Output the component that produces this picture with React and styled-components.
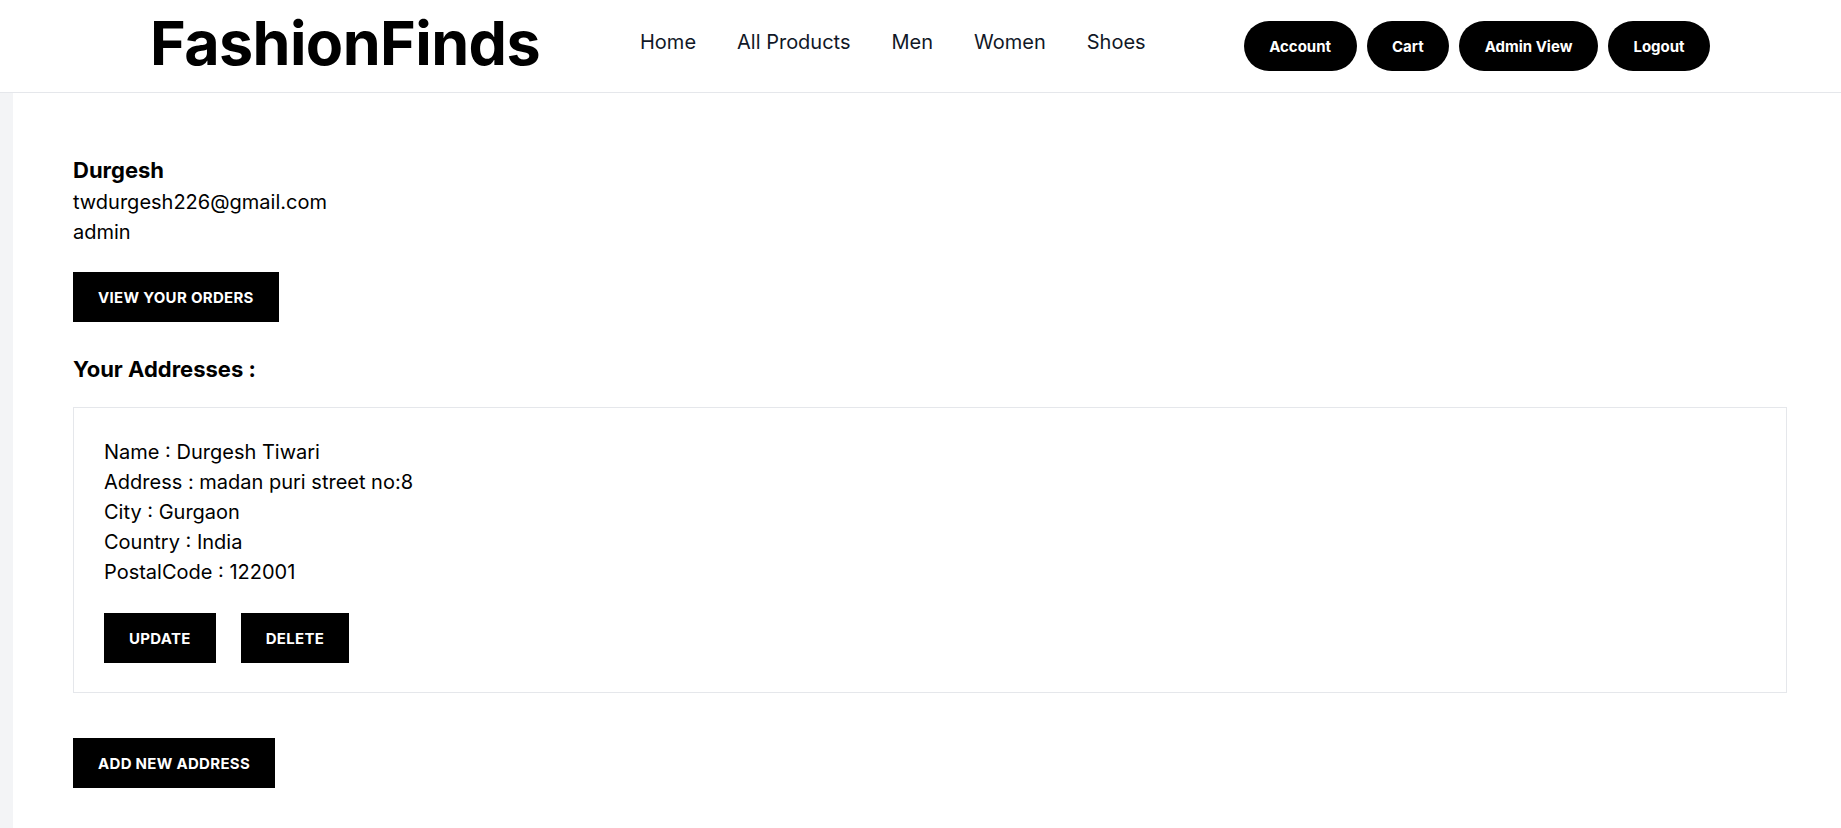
import React from 'react';
import styled, { createGlobalStyle } from 'styled-components';

const GlobalStyle = createGlobalStyle`
  body {
    margin: 0;
    font-family: Inter, "Liberation Sans", sans-serif;
    background: #fff;
    color: #000;
  }
`;

// Header
const Header = styled.header`
  display: flex;
  align-items: center;
  gap: 100px;
  height: 92px;
  padding-left: 150px;
  border-bottom: 1px solid #e5e7eb;
  background: #fff;
`;

const Logo = styled.h1`
  margin: 0 0 6px;
  font-size: 61px;
  font-weight: 700;
  letter-spacing: -0.6px;
  line-height: 1;
  color: #000;
`;

const Nav = styled.nav`
  display: flex;
  gap: 41px;
  margin-bottom: 8px;
`;

const NavLink = styled.a`
  font-size: 20px;
  color: #111827;
  text-decoration: none;
`;

const Actions = styled.div`
  display: flex;
  gap: 10px;
  margin-left: -2px;
`;

const PillButton = styled.button`
  height: 50px;
  padding: 0 25.5px;
  border: none;
  border-radius: 25px;
  background: #000;
  color: #fff;
  font-family: inherit;
  font-size: 15px;
  font-weight: 700;
`;

// Body
const Main = styled.div`
  display: flex;
  min-height: 735px;
`;

const Strip = styled.div`
  width: 13px;
  background: #f3f4f6;
`;

const Content = styled.main`
  flex: 1;
  padding: 61px 54px 40px 60px;
`;

const Name = styled.div`
  font-size: 22px;
  font-weight: 700;
  line-height: 33px;
`;

const Line = styled.div`
  font-size: 20px;
  line-height: 30px;
`;

const BlockButton = styled.button`
  display: block;
  height: 50px;
  padding: 0 25px;
  margin-top: ${p => p.$top || 0}px;
  border: none;
  background: #000;
  color: #fff;
  font-family: inherit;
  font-size: 15px;
  font-weight: 700;
  letter-spacing: 0.3px;
  text-transform: uppercase;
`;

const Heading = styled.h2`
  margin: 31px 0 0;
  font-size: 22px;
  font-weight: 700;
  line-height: 33px;
`;

const Card = styled.div`
  margin-top: 21px;
  padding: 29px 30px 29px;
  border: 1px solid #e5e7eb;
`;

const ButtonRow = styled.div`
  display: flex;
  gap: 25px;
  margin-top: 26px;
`;

const address = {
  Name: 'Durgesh Tiwari',
  Address: 'madan puri street no:8',
  City: 'Gurgaon',
  Country: 'India',
  PostalCode: '122001',
};

export default function App() {
  return (
    <>
      <GlobalStyle />
      <Header>
        <Logo>FashionFinds</Logo>
        <Nav>
          <NavLink>Home</NavLink>
          <NavLink>All Products</NavLink>
          <NavLink>Men</NavLink>
          <NavLink>Women</NavLink>
          <NavLink>Shoes</NavLink>
        </Nav>
        <Actions>
          <PillButton>Account</PillButton>
          <PillButton>Cart</PillButton>
          <PillButton>Admin View</PillButton>
          <PillButton>Logout</PillButton>
        </Actions>
      </Header>
      <Main>
        <Strip />
        <Content>
          <Name>Durgesh</Name>
          <Line>twdurgesh226@gmail.com</Line>
          <Line>admin</Line>
          <BlockButton $top={25}>View your orders</BlockButton>
          <Heading>Your Addresses :</Heading>
          <Card>
            {Object.entries(address).map(([k, v]) => (
              <Line key={k}>{k} : {v}</Line>
            ))}
            <ButtonRow>
              <BlockButton>Update</BlockButton>
              <BlockButton>Delete</BlockButton>
            </ButtonRow>
          </Card>
          <BlockButton $top={45}>Add new address</BlockButton>
        </Content>
      </Main>
    </>
  );
}
